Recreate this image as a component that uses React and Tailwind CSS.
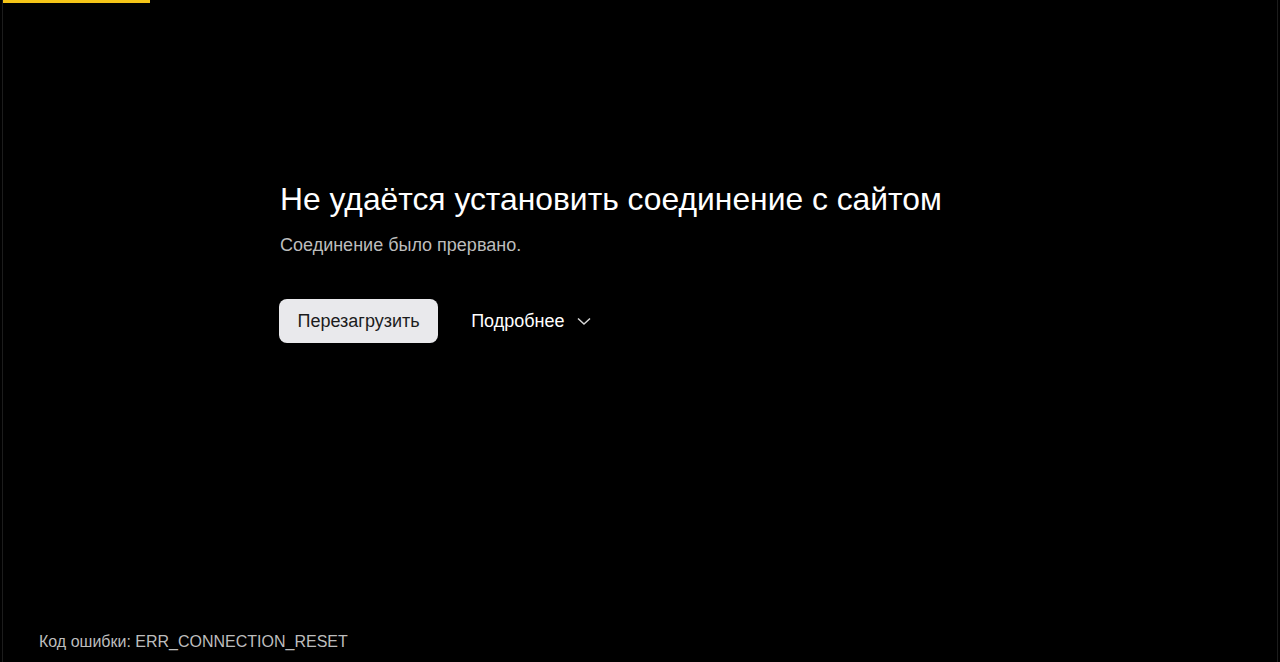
export default function App() {
  return (
    <div className="relative h-[662px] w-[1280px] overflow-hidden bg-black" style={{ fontFamily: '"Liberation Sans", Arial, sans-serif' }}>
      <div className="absolute left-[3px] top-0 h-[3px] w-[147px] bg-[#f5c518]" />
      <div className="flex h-full border-l-[1px] border-r-[1px] border-[#1c1c1c] ml-[2px] mr-[2px]">
        <div className="flex h-full w-full flex-col">
          <div className="pl-[276px] pt-[179px]">
            <h1 className="pl-[1px] text-[31.8px] leading-[40px] text-white">Не удаётся установить соединение с сайтом</h1>
            <p className="mt-[15px] pl-[1px] text-[18px] leading-[22px] text-[#bdbdbd]">Соединение было прервано.</p>
            <div className="mt-[43px] flex items-center">
              <button className="h-[44px] rounded-[8px] bg-[#e9e9ec] px-[18.5px] text-[18px] text-[#1c1c1c]">Перезагрузить</button>
              <button className="ml-[33px] flex items-center text-[18px] text-white">
                Подробнее
                <svg className="ml-[11px]" width="16" height="16" viewBox="0 0 16 16" fill="none" stroke="#d8d8d8" strokeWidth="1.5">
                  <path d="M2 5.5l6 5.5 6-5.5" />
                </svg>
              </button>
            </div>
          </div>
          <div className="mt-auto pb-[10px] pl-[36px] text-[16px] leading-[20px] text-[#bdbdbd]">Код ошибки: ERR_CONNECTION_RESET</div>
        </div>
      </div>
    </div>
  );
}
